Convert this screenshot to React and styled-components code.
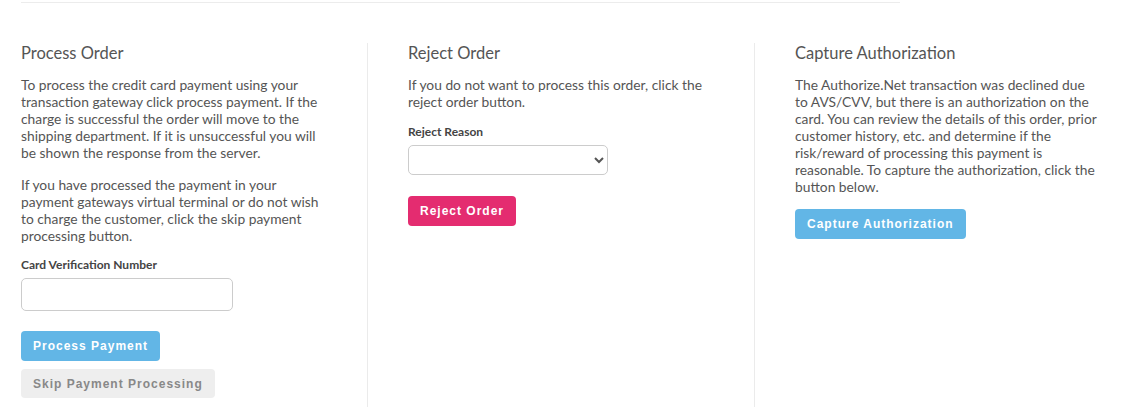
import React from 'react';
import styled, { createGlobalStyle } from 'styled-components';

const GlobalStyle = createGlobalStyle`
  html, body {
    margin: 0;
    padding: 0;
    background: #fff;
  }
  body {
    font-family: Lato, "Open Sans", sans-serif;
    color: #555;
  }
`;

const Page = styled.div`
  width: 1142px;
  height: 407px;
  overflow: hidden;
`;

const TopRule = styled.div`
  margin-left: 21px;
  width: 879px;
  margin-top: 2px;
  border-top: 1px solid #ececec;
`;

const Columns = styled.div`
  display: grid;
  grid-template-columns: 367px 387px 1fr;
  margin-top: 40px;
`;

const Column = styled.section`
  padding: 0 40px 30px ${p => (p.$first ? '21px' : '40px')};
  border-left: ${p => (p.$first ? 'none' : '1px solid #ebebeb')};
  min-height: 365px;
  box-sizing: border-box;
`;

const Heading = styled.h3`
  margin: 0;
  font-size: 16.5px;
  font-weight: 400;
  line-height: 20px;
  color: #555;
`;

const Text = styled.p`
  margin: 13px 0 0;
  max-width: 306px;
  font-size: 13.8px;
  line-height: 17px;
  color: #555;
  & + & {
    margin-top: 15px;
  }
`;

const Label = styled.label`
  display: block;
  margin-top: ${p => p.$top || 12}px;
  font-size: 12px;
  font-weight: 700;
  line-height: 15px;
  color: #444;
`;

const Input = styled.input`
  display: block;
  box-sizing: border-box;
  margin-top: 6px;
  width: 212px;
  height: 33px;
  border: 1px solid #ccc;
  border-radius: 5px;
  background: #fff;
`;

const Select = styled.select`
  display: block;
  box-sizing: border-box;
  margin-top: 6px;
  width: 200px;
  height: 30px;
  border: 1px solid #ccc;
  border-radius: 5px;
  background: #fff;
  color: #555;
`;

const tones = {
  blue: { bg: '#62b6e6', fg: '#fff' },
  pink: { bg: '#e42c70', fg: '#fff' },
  grey: { bg: '#eeeeee', fg: '#888' },
};

const Button = styled.button`
  display: block;
  margin-top: ${p => p.$top || 0}px;
  height: ${p => p.$h || 30}px;
  padding: 0 12px 0 12px;
  border: none;
  border-radius: 4px;
  background: ${p => tones[p.$tone].bg};
  color: ${p => tones[p.$tone].fg};
  font-family: "Liberation Sans", Arial, sans-serif;
  font-size: 12px;
  font-weight: 700;
  letter-spacing: 1px;
  cursor: pointer;
`;

export default function App() {
  return (
    <Page>
      <GlobalStyle />
      <TopRule />
      <Columns>
        <Column $first>
          <Heading>Process Order</Heading>
          <Text>
            To process the credit card payment using your transaction gateway click
            process payment. If the charge is successful the order will move to the
            shipping department. If it is unsuccessful you will be shown the response
            from the server.
          </Text>
          <Text>
            If you have processed the payment in your payment gateways virtual terminal
            or do not wish to charge the customer, click the skip payment processing
            button.
          </Text>
          <Label $top={13}>Card Verification Number</Label>
          <Input type="text" />
          <Button $tone="blue" $top={20}>Process Payment</Button>
          <Button $tone="grey" $top={8} $h={29}>Skip Payment Processing</Button>
        </Column>
        <Column>
          <Heading>Reject Order</Heading>
          <Text>If you do not want to process this order, click the reject order button.</Text>
          <Label $top={14}>Reject Reason</Label>
          <Select>
            <option value=""></option>
          </Select>
          <Button $tone="pink" $top={21}>Reject Order</Button>
        </Column>
        <Column>
          <Heading>Capture Authorization</Heading>
          <Text>
            The Authorize.Net transaction was declined due to AVS/CVV, but there is an
            authorization on the card. You can review the details of this order, prior
            customer history, etc. and determine if the risk/reward of processing this
            payment is reasonable. To capture the authorization, click the button below.
          </Text>
          <Button $tone="blue" $top={14}>Capture Authorization</Button>
        </Column>
      </Columns>
    </Page>
  );
}
